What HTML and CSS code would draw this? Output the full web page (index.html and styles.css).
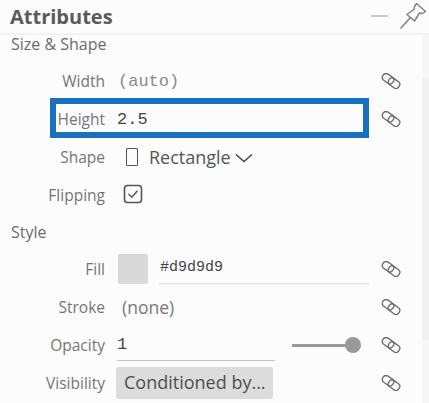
FILE: index.html
```html
<!DOCTYPE html>
<html lang="en">
<head>
<meta charset="utf-8">
<title>Attributes</title>
<link rel="stylesheet" href="styles.css">
</head>
<body>
<svg class="defs" width="0" height="0" aria-hidden="true">
  <symbol id="link" viewBox="0 0 20 16">
    <g fill="none" stroke="#686868" stroke-width="1.3">
      <rect x="1" y="1.9" width="12" height="7.6" rx="3.4" transform="rotate(35 7 5.7)"/>
      <rect x="7" y="6.4" width="12" height="7.6" rx="3.4" transform="rotate(35 13 10.2)"/>
    </g>
  </symbol>
</svg>
<div class="panel">
  <header class="head">
    <h1 class="title">Attributes</h1>
    <span class="minimize"></span>
    <svg class="pin" width="28" height="28" viewBox="0 0 28 28">
      <path d="M17.5 1.5 L26.5 9.5 L23.5 11.5 L20.5 11 L15.5 19 L8 12.5 L15 7.5 L15.5 4.5 Z M11 16 L1.5 26.5" fill="none" stroke="#808080" stroke-width="1.5" stroke-linejoin="round"/>
    </svg>
  </header>
  <div class="body">
    <main class="content">
      <h2 class="section first">Size &amp; Shape</h2>
      <div class="row">
        <span class="label">Width</span>
        <span class="value mono-lg muted">(auto)</span>
        <svg class="link"><use href="#link"/></svg>
      </div>
      <div class="row highlighted">
        <span class="label">Height</span>
        <span class="value mono-lg dark">2.5</span>
        <svg class="link"><use href="#link"/></svg>
      </div>
      <div class="row">
        <span class="label">Shape</span>
        <span class="value shape">
          <span class="rect-icon"></span>
          <span>Rectangle</span>
          <svg class="chevron" width="18" height="10" viewBox="0 0 18 10"><path d="M1 1.5 L9 8.5 L17 1.5" fill="none" stroke="#444" stroke-width="1.5"/></svg>
        </span>
      </div>
      <div class="row">
        <span class="label">Flipping</span>
        <span class="value">
          <svg class="check" width="20" height="20" viewBox="0 0 20 20">
            <rect x="1.5" y="1.5" width="17" height="17" rx="3" fill="none" stroke="#555" stroke-width="1.6"/>
            <path d="M5.5 10 L8.8 13.2 L14.5 6.8" fill="none" stroke="#555" stroke-width="1.4"/>
          </svg>
        </span>
      </div>
      <h2 class="section">Style</h2>
      <div class="row">
        <span class="label">Fill</span>
        <span class="value fill-value">
          <span class="swatch"></span>
          <span class="input mono dark">#d9d9d9</span>
        </span>
        <svg class="link"><use href="#link"/></svg>
      </div>
      <div class="row">
        <span class="label">Stroke</span>
        <span class="value none">(none)</span>
        <svg class="link"><use href="#link"/></svg>
      </div>
      <div class="row">
        <span class="label">Opacity</span>
        <span class="value opacity">
          <span class="input short mono-lg dark">1</span>
          <span class="slider"><span class="track"></span><span class="thumb"></span></span>
        </span>
        <svg class="link"><use href="#link"/></svg>
      </div>
      <div class="row">
        <span class="label">Visibility</span>
        <span class="value"><span class="button">Conditioned by...</span></span>
        <svg class="link"><use href="#link"/></svg>
      </div>
    </main>
    <div class="scrollbar"><div class="thumb-bar"></div></div>
  </div>
</div>
</body>
</html>
```
FILE: styles.css
```css
*, *::after { box-sizing: border-box; }
html, body { margin: 0; padding: 0; }
body {
  width: 429px;
  height: 403px;
  overflow: hidden;
  background: #fcfcfc;
  font-family: "Open Sans", "Noto Sans", sans-serif;
  color: #666;
}
.defs { position: absolute; }
.panel { display: flex; flex-direction: column; height: 403px; }
.head {
  height: 35px;
  flex: none;
  display: flex;
  align-items: center;
  padding: 0 0 0 10px;
  border-bottom: 2px solid #f2f2f2;
}
.title {
  margin: 0;
  flex: 1;
  font-size: 20px;
  font-weight: 700;
  color: #5a5a5a;
  line-height: 34px;
}
.minimize { width: 17px; height: 2px; background: #c8c8c8; margin-right: 11px; margin-top: -2px; }
.pin { margin-right: 2px; margin-top: -2px; }
.body { flex: 1; display: flex; min-height: 0; }
.content { flex: 1; min-width: 0; }
.scrollbar { width: 7px; flex: none; background: #f7f7f7; padding-top: 43px; }
.thumb-bar { height: 262px; background: #f1f1f1; }
.section {
  margin: 0;
  padding-left: 11px;
  font-size: 16px;
  font-weight: 400;
  color: #6b6b6b;
  line-height: 20px;
  height: 20px;
}
.section.first { height: 28px; margin-top: -1px; }
.section:not(.first) { height: 18px; margin-top: 8px; margin-bottom: 10px; }
.row {
  position: relative;
  height: 38px;
  display: flex;
  align-items: center;
}
.label {
  width: 105px;
  flex: none;
  text-align: right;
  font-size: 15.5px;
  color: #757575;
}
.value { margin-left: 11px; display: flex; align-items: center; flex: 1; min-width: 0; }
.link { width: 20px; height: 16px; position: absolute; left: 381px; top: 11px; }
.mono { font-family: "Liberation Mono", "DejaVu Sans Mono", monospace; font-size: 15px; }
.mono-lg { font-family: "Liberation Mono", "DejaVu Sans Mono", monospace; font-size: 17px; }
.muted { color: #8a8a8a; margin-left: 13px; }
.dark { color: #444; }
.highlighted::after {
  content: "";
  position: absolute;
  left: 50px;
  top: -2px;
  width: 319px;
  height: 40px;
  border: 6px solid #1a70bd;
}
.highlighted .dark { margin-left: 12px; }
.shape { font-size: 18px; color: #555; margin-left: 9px; }
.rect-icon { width: 12px; height: 18px; border: 1.5px solid #555; border-radius: 1px; margin: 0 11px 0 12px; flex: none; }
.chevron { margin-left: 4px; margin-top: 2px; }
.check { margin-left: 7px; margin-top: -2px; }
.fill-value { margin-left: 13px; }
.swatch { width: 30px; height: 30px; background: #d9d9d9; border-radius: 2px; flex: none; }
.input { display: block; height: 30px; line-height: 28px; border-bottom: 1px solid #dcdcdc; }
.fill-value .input { width: 210px; margin-left: 11px; padding-left: 1px; }
.none { font-size: 17.5px; color: #777; margin-left: 17px; }
.opacity { margin-left: 12px; }
.input.short { width: 158px; padding-left: 0; border-bottom-color: #c4c4c4; margin-top: 1px; }
.slider { display: flex; align-items: center; margin-left: 17px; width: 69px; }
.track { flex: 1; height: 3px; background: #999; }
.thumb { width: 16px; height: 16px; border-radius: 50%; background: #999; margin-left: -1px; }
.button {
  display: block;
  width: 157px;
  height: 32px;
  background: #dcdcdc;
  border-radius: 2px;
  color: #4f4f4f;
  font-size: 18px;
  line-height: 31px;
  padding-left: 8px;
}
```
